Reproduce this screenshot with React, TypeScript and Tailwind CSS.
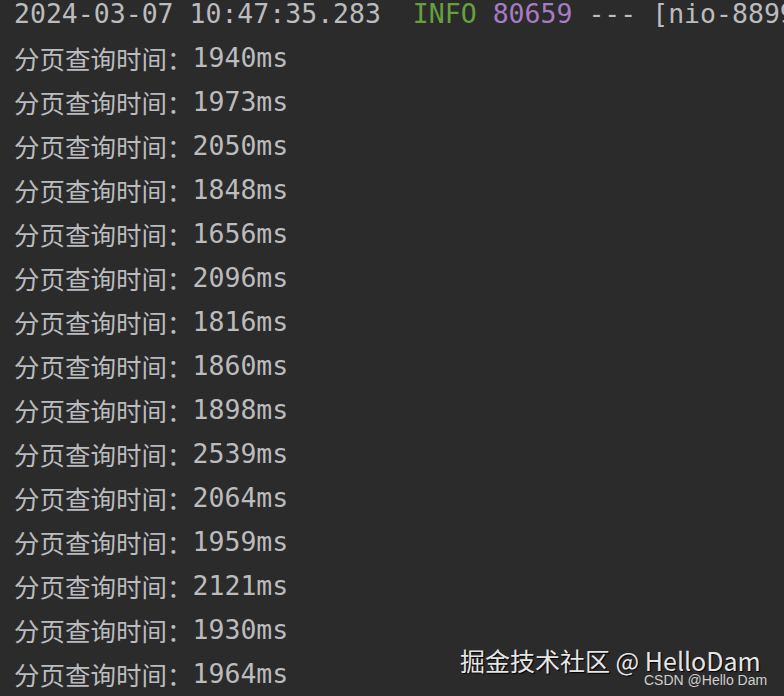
import React from 'react';

const times = [
  '1940', '1973', '2050', '1848', '1656', '2096', '1816', '1860',
  '1898', '2539', '2064', '1959', '2121', '1930', '1964',
];

const mono = "font-['DejaVu_Sans_Mono','Noto_Sans_CJK_SC',monospace]";

export default function App() {
  return (
    <div className="relative w-[784px] h-[696px] overflow-hidden bg-[#2b2b2b] text-[#bbbcbf]">
      <div className={`-mt-[8px] pl-[14px] text-[26.5px] whitespace-pre ${mono}`}>
        <div className="h-[44px] flex items-center">
          <span className="leading-[44px]">
            2024-03-07 10:47:35.283  <span className="text-[#66a03e]">INFO</span>{' '}
            <span className="text-[#a77cc2]">80659</span> --- [nio-8899
          </span>
        </div>
        {times.map((t, i) => (
          <div key={i} className="h-[44px] flex items-center">
            <span className="font-['Noto_Sans_CJK_SC',sans-serif] text-[25.5px] leading-[44px]">分页查询时间：</span>
            <span className="leading-[44px]">{t}ms</span>
          </div>
        ))}
      </div>
      <div className="absolute left-[460px] top-[643px] text-[25px] leading-[34px] text-[#e6e6e6] font-['Noto_Sans_CJK_SC',sans-serif] [text-shadow:1px_1px_1px_#000]">
        掘金技术社区 @ HelloDam
      </div>
      <div className="absolute left-[644px] top-[671px] text-[14px] leading-[18px] text-[#d0d0d0] font-['Liberation_Sans',sans-serif]">
        CSDN @Hello Dam
      </div>
    </div>
  );
}
